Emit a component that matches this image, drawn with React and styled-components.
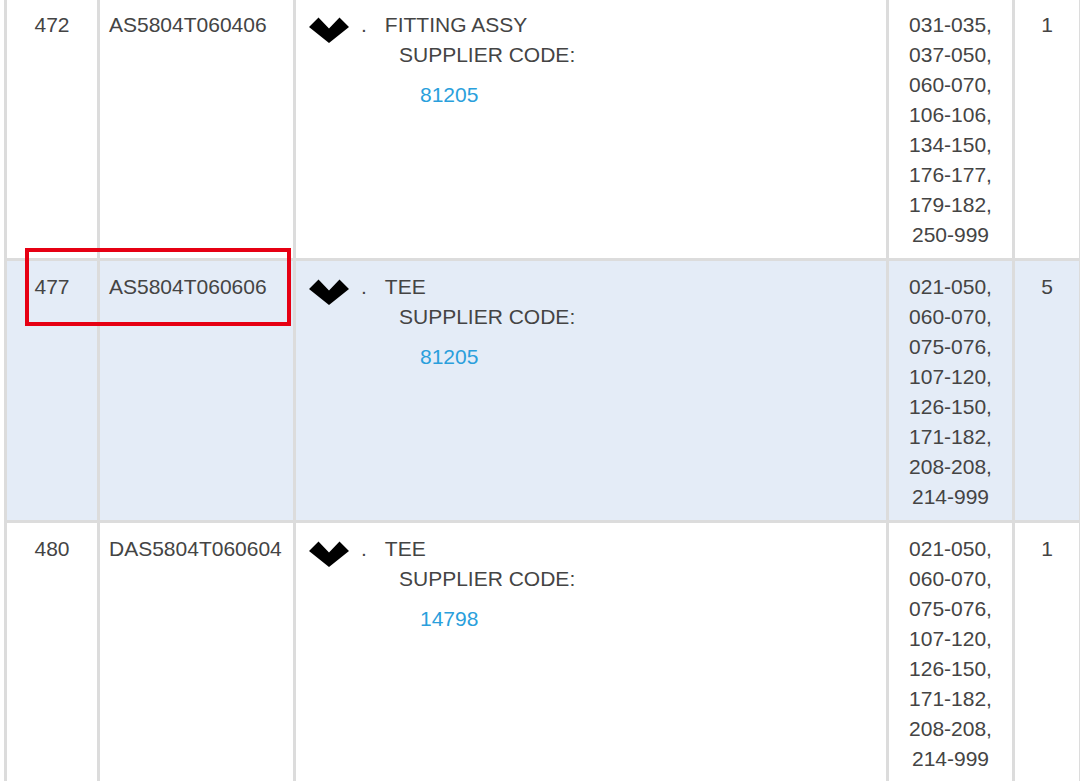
import styled, { createGlobalStyle } from "styled-components";

const GlobalStyle = createGlobalStyle`
  html, body {
    margin: 0;
    padding: 0;
    background: #fff;
    overflow: hidden;
  }
  body {
    font-family: "Liberation Sans", Arial, sans-serif;
    font-size: 21px;
    line-height: 30px;
    color: #444;
  }
`;

const Table = styled.div`
  display: inline-grid;
  row-gap: 3px;
  margin: -4px 0 0 4px;
  padding: 3px;
  background: #dcdcdc;
`;

const Row = styled.div`
  display: grid;
  grid-template-columns: 90px 193px 590px 123px 64px;
  column-gap: 3px;
`;

const Cell = styled.div`
  position: relative;
  background: ${(p) => (p.$active ? "#e4ecf7" : "#fff")};
  padding: 11px 9px 8px;
  text-align: ${(p) => p.$align || "left"};
`;

const Highlight = styled.div`
  position: absolute;
  left: 18px;
  top: -13px;
  width: 258px;
  height: 70px;
  border: 4px solid #e60013;
  z-index: 1;
  pointer-events: none;
`;

const Head = styled.div`
  display: flex;
  align-items: flex-start;
  height: 30px;
`;

const Chevron = styled.svg`
  flex: none;
  width: 40px;
  height: 26px;
  margin: 7px 0 0 4px;
`;

const Dot = styled.span`
  margin-left: 12px;
`;

const Title = styled.span`
  margin-left: 18px;
`;

const Details = styled.div`
  padding-left: 94px;
`;

const SupplierCode = styled.div`
  margin-top: 10px;
  padding-left: 21px;
  color: #2a9fdc;
`;

const rows = [
  {
    no: "472",
    part: "AS5804T060406",
    name: "FITTING ASSY",
    supplier: "81205",
    codes: ["031-035", "037-050", "060-070", "106-106", "134-150", "176-177", "179-182", "250-999"],
    qty: "1",
  },
  {
    no: "477",
    part: "AS5804T060606",
    name: "TEE",
    supplier: "81205",
    codes: ["021-050", "060-070", "075-076", "107-120", "126-150", "171-182", "208-208", "214-999"],
    qty: "5",
    active: true,
  },
  {
    no: "480",
    part: "DAS5804T060604",
    name: "TEE",
    supplier: "14798",
    codes: ["021-050", "060-070", "075-076", "107-120", "126-150", "171-182", "208-208", "214-999"],
    qty: "1",
  },
];

const ChevronIcon = () => (
  <Chevron viewBox="0 0 40 26">
    <polygon points="0,10 9.5,0.5 20,11.5 30.5,0.5 40,10 20,26" fill="#000" />
  </Chevron>
);

export default function App() {
  return (
    <>
      <GlobalStyle />
      <Table>
        {rows.map((r) => (
          <Row key={r.no}>
            <Cell $active={r.active} $align="center">
              {r.no}
              {r.active && <Highlight />}
            </Cell>
            <Cell $active={r.active}>{r.part}</Cell>
            <Cell $active={r.active}>
              <Head>
                <ChevronIcon />
                <Dot>.</Dot>
                <Title>{r.name}</Title>
              </Head>
              <Details>
                SUPPLIER CODE:
                <SupplierCode>{r.supplier}</SupplierCode>
              </Details>
            </Cell>
            <Cell $active={r.active} $align="center">
              {r.codes.map((c, i) => (
                <div key={c + i}>
                  {c}
                  {i < r.codes.length - 1 ? "," : ""}
                </div>
              ))}
            </Cell>
            <Cell $active={r.active} $align="center">
              {r.qty}
            </Cell>
          </Row>
        ))}
      </Table>
    </>
  );
}
